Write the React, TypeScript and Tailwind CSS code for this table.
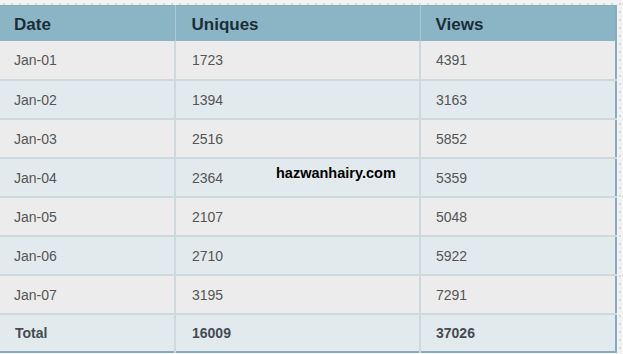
import React from 'react';

const rows = [
  { date: 'Jan-01', uniques: 1723, views: 4391 },
  { date: 'Jan-02', uniques: 1394, views: 3163 },
  { date: 'Jan-03', uniques: 2516, views: 5852 },
  { date: 'Jan-04', uniques: 2364, views: 5359 },
  { date: 'Jan-05', uniques: 2107, views: 5048 },
  { date: 'Jan-06', uniques: 2710, views: 5922 },
  { date: 'Jan-07', uniques: 3195, views: 7291 },
];

export default function App() {
  return (
    <div
      className="relative w-[623px] h-[354px] overflow-hidden bg-[#f3f3f3] bg-[radial-gradient(#d8d8d8_1px,transparent_1px)] bg-[length:8px_8px] pt-[5px]"
      style={{ fontFamily: '"Liberation Sans", Arial, sans-serif' }}
    >
      <table className="w-[617px] border-collapse table-fixed border-r-2 border-b-2 border-t border-[#86adbd]">
        <colgroup>
          <col className="w-[175px]" />
          <col className="w-[245px]" />
          <col />
        </colgroup>
        <thead>
          <tr className="h-[35px] bg-[#8bb5c5] text-[#1c2d3a] text-[17px] font-bold text-left">
            <th className="pl-[14px] pt-[2px] border-r border-[#a9c8d4] font-bold">Date</th>
            <th className="pl-[16px] pt-[2px] border-r border-[#a9c8d4] font-bold">Uniques</th>
            <th className="pl-[15px] pt-[2px] font-bold">Views</th>
          </tr>
        </thead>
        <tbody className="text-[14px] text-[#555]">
          {rows.map((r, i) => (
            <tr
              key={r.date}
              className={`h-[39px] border-b-2 border-[#ced9dd] ${i % 2 === 0 ? 'bg-[#ececec]' : 'bg-[#e3eaed]'}`}
            >
              <td className="pl-[14px] pt-[2px] border-r-2 border-[#ced9dd]">{r.date}</td>
              <td className="pl-[16px] pt-[2px] border-r-2 border-[#ced9dd]">{r.uniques}</td>
              <td className="pl-[15px] pt-[2px]">{r.views}</td>
            </tr>
          ))}
          <tr className="h-[38px] bg-[#e3eaed] font-bold text-[#454b52] text-[14px]">
            <td className="pl-[15px] pt-[1px] border-r-2 border-[#ced9dd]">Total</td>
            <td className="pl-[16px] pt-[1px] border-r-2 border-[#ced9dd]">16009</td>
            <td className="pl-[15px] pt-[1px]">37026</td>
          </tr>
        </tbody>
      </table>
      <div className="absolute left-[276px] top-[163px] text-[14.5px] font-bold text-black">hazwanhairy.com</div>
    </div>
  );
}
